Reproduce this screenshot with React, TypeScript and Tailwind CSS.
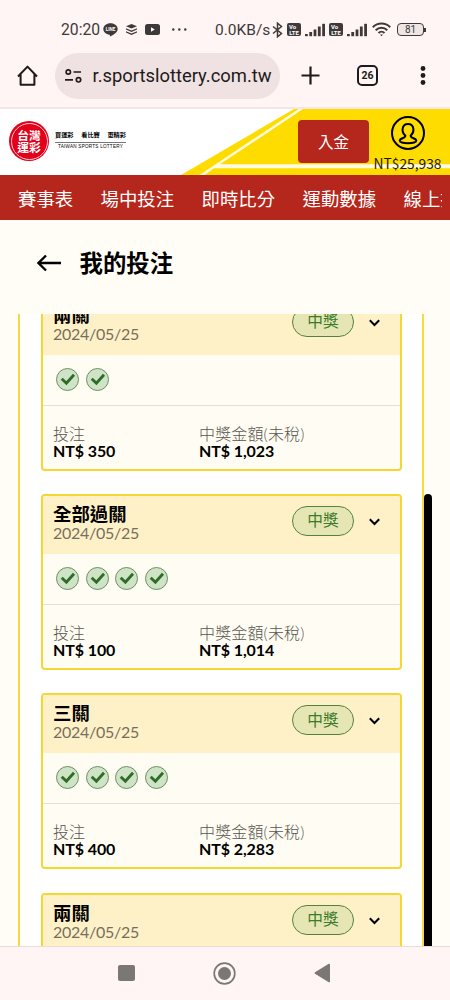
import React from "react";

interface Bet {
  title: string;
  date: string;
  legs: number;
  stake: string;
  payout: string;
}

const bets: Bet[] = [
  { title: "兩關", date: "2024/05/25", legs: 2, stake: "350", payout: "1,023" },
  { title: "全部過關", date: "2024/05/25", legs: 4, stake: "100", payout: "1,014" },
  { title: "三關", date: "2024/05/25", legs: 4, stake: "400", payout: "2,283" },
  { title: "兩關", date: "2024/05/25", legs: 2, stake: "350", payout: "1,023" },
];

const navItems = ["賽事表", "場中投注", "即時比分", "運動數據", "線上投注"];

function Signal() {
  return (
    <svg className="h-3.5 w-5 shrink-0" viewBox="0 0 20 14" fill="#3f3a3a">
      <rect x="0" y="11" width="2.8" height="2.2" />
      <rect x="4.3" y="9" width="2.8" height="4.2" />
      <rect x="8.6" y="6.5" width="2.8" height="6.7" />
      <rect x="12.9" y="3.5" width="2.8" height="9.7" />
      <rect x="17.2" y="0.8" width="2.8" height="12.4" />
    </svg>
  );
}

function Volte() {
  return (
    <span className="flex h-[13px] w-3.5 shrink-0 flex-col items-center justify-center rounded-xs bg-[#3f3a3a] text-[6px] leading-[5.5px] font-bold text-white">
      <span className="self-start pl-0.5">Vo</span>
      <span>LTE</span>
    </span>
  );
}

function StatusBar() {
  return (
    <div className="flex h-[41px] items-end pl-[61px] font-[Roboto,sans-serif] text-[#3f3a3a]">
      <div className="flex h-[23px] w-[154px] shrink-0 items-center">
        <span className="w-[42px] shrink-0 text-[15.7px] leading-4">20:20</span>
        <svg className="h-[14px] w-[15px]" viewBox="0 0 15 14">
          <path
            d="M7.5 0.3C3.4 0.3 0.3 2.9 0.3 6.1c0 3 2.6 5.3 6.2 5.7.7.1.5.9.4 1.8 3.2-1.5 7.8-4 7.8-7.5C14.7 2.9 11.6.3 7.5.3z"
            fill="#3f3a3a"
          />
          <text x="7.5" y="7.9" fontSize="4.5" fontWeight="700" textAnchor="middle" fill="#fff">
            LINE
          </text>
        </svg>
        <svg className="ml-2 h-[11px] w-[11px]" viewBox="0 0 11 11" fill="#3f3a3a">
          <path d="M5.5 0 11 2.3 5.5 4.6 0 2.3z" />
          <path d="M0 4.3 5.5 6.5 11 4.3v1.2L5.5 7.900 0 5.500z" />
          <path d="M0 7.2 5.5 9.4 11 7.2v1.2L5.5 10.900 0 8.400z" />
        </svg>
        <svg className="ml-2 h-[11px] w-[15px]" viewBox="0 0 15 11">
          <rect width="15" height="11" rx="2.5" fill="#3f3a3a" />
          <path d="M6 3.3v4.4l3.8-2.2z" fill="#fff" />
        </svg>
        <svg className="ml-3 h-[3px] w-[15px]" viewBox="0 0 15 3" fill="#3f3a3a">
          <circle cx="1.3" cy="1.5" r="1.2" />
          <circle cx="7.3" cy="1.5" r="1.2" />
          <circle cx="13.3" cy="1.5" r="1.2" />
        </svg>
      </div>
      <div className="flex h-[23px] items-center">
        <span className="w-[57px] shrink-0 text-[15.5px] leading-4">0.0KB/s</span>
        <svg className="h-[16px] w-[11px] shrink-0" viewBox="0 0 11 16" fill="none" stroke="#3f3a3a" strokeWidth="1.5">
          <path d="M1 4.500 9.500 11.500 5.500 14.800V1.200L9.500 4.500 1 11.500" />
        </svg>
        <div className="ml-1 flex items-center gap-1">
          <Volte />
          <Signal />
          <Volte />
          <Signal />
        </div>
        <svg className="ml-[5px] h-[15px] w-[19px] shrink-0" viewBox="0 0 19 15" fill="none" stroke="#3f3a3a" strokeWidth="2">
          <path d="M.8 5.200C5.800.4 13.200.4 18.200 5.200" />
          <path d="M3.700 8.200c3.300-3.300 8.300-3.300 11.600 0" />
          <path d="M6.500 11c1.700-1.700 4.300-1.700 6 0" />
          <path d="m8 12.400 1.500 1.800 1.500-1.800z" fill="#3f3a3a" stroke="none" />
        </svg>
        <span className="ml-1.5 flex h-[13px] w-[27px] shrink-0 items-center justify-center rounded-[4px] border border-[#3f3a3a] bg-[#eee6e5] text-[10px]">
          81
        </span>
        <span className="h-1 w-0.5 bg-[#3f3a3a]" />
      </div>
    </div>
  );
}

function BrowserBar() {
  return (
    <div className="flex h-[66px] items-center pt-[3px] font-[Roboto,sans-serif] text-[#201a1a]">
      <svg className="ml-[17px] h-[21px] w-[21px]" viewBox="0 0 21 21" fill="none" stroke="currentColor" strokeWidth="2">
        <path d="M1 11.500 10.500 1.600 20 11.500M3.600 9.500V19.800H17.400V9.500" strokeLinejoin="round" />
      </svg>
      <div className="ml-[17px] flex h-[46px] w-[225px] items-center rounded-full bg-[#f0e2e2]">
        <svg className="ml-[10px] h-[14px] w-[17px]" viewBox="0 0 17 14" fill="none" stroke="currentColor" strokeWidth="1.7">
          <circle cx="3.3" cy="3" r="2.2" />
          <path d="M8.500 3H16M0 10.800H8" />
          <circle cx="13.5" cy="10.8" r="2.2" />
        </svg>
        <span className="ml-[10.5px] text-[18.4px] whitespace-nowrap">r.sportslottery.com.tw</span>
      </div>
      <svg className="ml-[21px] h-[19px] w-[19px]" viewBox="0 0 19 19" stroke="currentColor" strokeWidth="2.2">
        <path d="M9.500 .5v18M.5 9.500h18" />
      </svg>
      <span className="ml-[37px] flex h-[21px] w-[21px] items-center justify-center rounded-[5px] border-2 border-[#201a1a] text-[10.5px] font-bold">
        26
      </span>
      <svg className="ml-[42px] h-[19px] w-[6px]" viewBox="0 0 6 19" fill="currentColor">
        <circle cx="3" cy="2.5" r="2.4" />
        <circle cx="3" cy="9.5" r="2.4" />
        <circle cx="3" cy="16.5" r="2.4" />
      </svg>
    </div>
  );
}

function Logo() {
  return (
    <div className="flex items-center">
      <div className="flex h-10 w-10 items-center justify-center rounded-full bg-[#e2001a]">
        <div className="flex h-[37px] w-[37px] flex-col items-center justify-center rounded-full border border-[#f9c9cd] text-[11.8px] leading-[12.5px] font-bold text-white">
          <span>台灣</span>
          <span>運彩</span>
        </div>
      </div>
      <div className="-mt-0.5 ml-[6px] w-[71px] text-black">
        <div className="flex justify-between border-b border-[#777] pb-[3px] text-[6.2px] leading-[9px] font-bold whitespace-nowrap">
          <span>買運彩</span>
          <span>看比賽</span>
          <span>更精彩</span>
        </div>
        <div className="text-center font-['Liberation_Sans',sans-serif] text-[4.6px] leading-[7px] tracking-[.25px] whitespace-nowrap">
          TAIWAN SPORTS LOTTERY
        </div>
      </div>
    </div>
  );
}

function SiteHeader() {
  return (
    <header className="relative h-[68px] border-t-2 border-[#f3e6e4] bg-white">
      <svg className="absolute inset-0 h-[66px] w-[450px]" viewBox="0 0 450 66">
        <path d="M181 66 294 0H450V66z" fill="#fedc00" />
        <path d="M199.500 66 298.500 0H303L220 55.300H450V59.200H214L204.500 66z" fill="#fffbe0" />
      </svg>
      <div className="relative flex h-full pl-[9px] font-['Noto_Sans_CJK_TC',sans-serif]">
        <div className="flex h-[64px] w-[289px] items-center">
          <Logo />
        </div>
        <button className="mt-[11px] h-[43px] w-[71px] rounded-[4px] bg-[#b5261c] text-[15.5px] text-white">
          入金
        </button>
        <div className="ml-1 flex w-[69px] flex-col items-center">
          <svg className="mt-[7px] h-[34px] w-[34px] shrink-0" viewBox="0 0 34 34" fill="none" stroke="#000" strokeWidth="2">
            <circle cx="17" cy="17" r="16" />
            <path d="M14.300 19.500c-2-1.600-3-4-2.700-6.500C12 9.800 14 8 17 8s5 1.800 5.400 5c.3 2.500-.7 4.900-2.700 6.500-.3 1.400.5 1.800 2.300 2.500 2 .8 3.200 1.600 3.300 2.600.1 1.600-3.300 2.700-8.300 2.700s-8.400-1.100-8.300-2.700c.1-1 1.300-1.800 3.300-2.600 1.800-.7 2.600-1.100 2.300-2.500z" />
          </svg>
          <span className="mt-px text-[13.8px] leading-[24px] text-[#1d1a00]">NT$25,938</span>
        </div>
      </div>
    </header>
  );
}

function CheckBadge() {
  return (
    <svg className="h-[23px] w-[23px]" viewBox="0 0 23 23" fill="none">
      <circle cx="11.5" cy="11.5" r="11" fill="#cfe3c6" stroke="#4f7a45" strokeWidth=".8" />
      <path d="m5.700 10.700 4.700 4.500L18 6.800" stroke="#2f6d27" strokeWidth="2.9" />
    </svg>
  );
}

function BetCard({ bet }: { bet: Bet }) {
  return (
    <article className="h-[176px] shrink-0 overflow-hidden rounded-[4px] border-2 border-[#f5d732] bg-[#fffdf3]">
      <div className="flex h-[57.5px] bg-[#fff1c7] pl-[10px]">
        <div className="w-[239px] pt-[7px]">
          <h2 className="text-[18.4px] leading-[22px] font-bold text-black">{bet.title}</h2>
          <p className="-mt-px text-base leading-[17px] tracking-[-.28px] text-[#766f5d]">{bet.date}</p>
        </div>
        <span className="mt-[10px] flex h-[30px] w-[62px] items-center justify-center rounded-full border border-[#55813f] bg-[#e6e6b5] text-[15.7px] text-[#3d7a2a]">
          中獎
        </span>
        <svg className="mt-[22px] ml-[15px] h-2 w-[11px]" viewBox="0 0 11 8" fill="none" stroke="#000" strokeWidth="2">
          <path d="m.8 1.200 4.700 4.800 4.700-4.800" />
        </svg>
      </div>
      <div className="flex h-[51px] items-center gap-[6.7px] border-b border-[#e2e0da] pl-[13px]">
        {Array.from({ length: bet.legs }, (_, i) => (
          <CheckBadge key={i} />
        ))}
      </div>
      <div className="flex pt-[19px] pl-[10px] text-base leading-[17px]">
        <div className="w-[146px]">
          <p className="font-light text-[#57554f]">投注</p>
          <p className="font-bold tracking-[-.1px] text-black">NT$ {bet.stake}</p>
        </div>
        <div>
          <p className="font-light tracking-[.15px] text-[#57554f]">中獎金額(未稅)</p>
          <p className="font-bold tracking-[-.1px] text-black">NT$ {bet.payout}</p>
        </div>
      </div>
    </article>
  );
}

export default function App() {
  return (
    <div className="flex h-[1000px] w-[450px] flex-col overflow-hidden bg-[#fff5f4]">
      <StatusBar />
      <BrowserBar />
      <SiteHeader />
      <nav className="h-[45px] bg-[#b5261c] pr-2 font-['Noto_Sans_CJK_TC',sans-serif]">
        <div className="flex h-full items-center gap-[27.4px] overflow-hidden pt-0.5 pl-[18px] text-[18.4px] whitespace-nowrap text-white">
          {navItems.map((item) => (
            <a key={item} className="shrink-0">
              {item}
            </a>
          ))}
        </div>
      </nav>
      <main className="flex min-h-0 flex-1 flex-col bg-[#fffdf5] font-[Lato,'Noto_Sans_CJK_TC',sans-serif]">
        <div className="flex h-[94px] shrink-0 items-center pb-2 pl-[37px]">
          <svg className="h-[18px] w-[24px]" viewBox="0 0 24 18" fill="none" stroke="#000" strokeWidth="2.3">
            <path d="M24 9H1.500M9 1.500 1.500 9 9 16.500" />
          </svg>
          <h1 className="ml-[18.5px] pt-0.5 text-[23.4px] font-bold text-black">我的投注</h1>
        </div>
        <div className="flex min-h-0 flex-1 overflow-hidden pl-[18px]">
          <div className="flex w-[406px] flex-col gap-[23.2px] border-x-2 border-[#f8da3e] bg-white pr-5 pl-[21px]">
            <div className="-mt-[42.2px]" />
            {bets.map((bet, i) => (
              <BetCard key={i} bet={bet} />
            ))}
          </div>
          <div className="mt-[180px] w-2 rounded-t-full bg-black" />
        </div>
      </main>
      <footer className="flex h-[54px] shrink-0 items-center border-t border-[#efd9d6] pb-px text-[#7b7777]">
        <span className="ml-[118px] h-4 w-[17px] rounded-[2px] bg-[#7b7777]" />
        <svg className="ml-[78px] h-[23px] w-[23px]" viewBox="0 0 23 23" fill="none">
          <circle cx="11.5" cy="11.5" r="10.3" stroke="currentColor" strokeWidth="1.7" />
          <circle cx="11.5" cy="11.5" r="6.5" fill="currentColor" />
        </svg>
        <svg className="ml-[78px] h-[20px] w-[17px]" viewBox="0 0 17 20" fill="currentColor">
          <path d="M1 9.300 14.800.8Q16 .3 16 1.500v17q0 1.200-1.200.7L1 10.700q-1-.7 0-1.400z" />
        </svg>
      </footer>
    </div>
  );
}
